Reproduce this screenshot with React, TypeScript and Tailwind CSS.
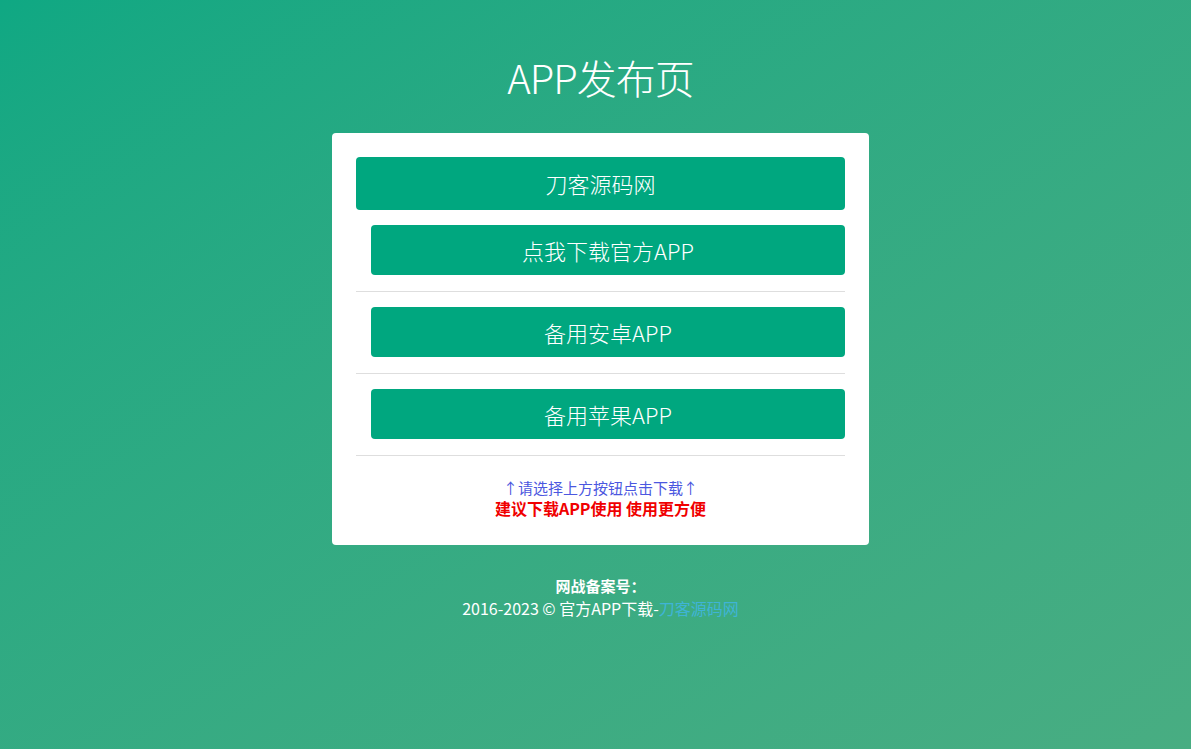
export default function App() {
  const cjk = { fontFamily: '"Noto Sans CJK SC", "Noto Sans", sans-serif' }

  return (
    <div
      style={cjk}
      className="min-h-[749px] w-full bg-gradient-to-br from-[#0fa883] to-[#48ad82] flex flex-col items-center pl-[10px]"
    >
      <h1 className="mt-[50px] text-[40px] leading-[54px] font-light text-white tracking-tight">APP发布页</h1>

      <div className="mt-[29px] w-[537px] bg-white rounded-[4px] px-6 pt-6 pb-[26px]">
        <a className="flex h-[53px] items-center justify-center rounded-[4px] bg-[#00a77f] text-[22px] font-light text-white">
          刀客源码网
        </a>
        <a className="mt-[15px] ml-[15px] flex h-[50px] items-center justify-center rounded-[4px] bg-[#00a77f] text-[22px] font-light text-white">
          点我下载官方APP
        </a>
        <div className="mt-4 mb-[15px] h-px bg-[#dedede]" />
        <a className="ml-[15px] flex h-[50px] items-center justify-center rounded-[4px] bg-[#00a77f] text-[22px] font-light text-white">
          备用安卓APP
        </a>
        <div className="mt-4 mb-[15px] h-px bg-[#dedede]" />
        <a className="ml-[15px] flex h-[50px] items-center justify-center rounded-[4px] bg-[#00a77f] text-[22px] font-light text-white">
          备用苹果APP
        </a>
        <div className="mt-4 h-px bg-[#dedede]" />
        <div className="mt-[21px] text-center">
          <p className="text-[15px] leading-[21px] text-[#4b57e0]">↑请选择上方按钮点击下载↑</p>
          <p className="text-[16px] leading-[21px] font-bold text-[#f00000]">建议下载APP使用 使用更方便</p>
        </div>
      </div>

      <div className="mt-[30px] text-center text-white text-[16px] leading-[22px]">
        <p className="font-bold text-[15px]">网战备案号：</p>
        <p>
          2016-2023 © 官方APP下载-<a className="text-[#3fb4d6]">刀客源码网</a>
        </p>
      </div>
    </div>
  )
}
